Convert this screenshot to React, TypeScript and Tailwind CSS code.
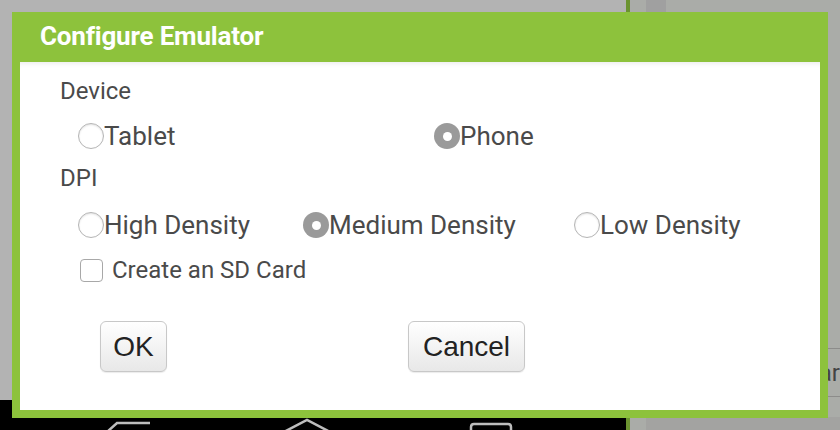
import React from "react";

const Radio = ({ checked }: { checked?: boolean }) =>
  checked ? (
    <span className="flex h-[26px] w-[26px] shrink-0 items-center justify-center rounded-full bg-[#9a9a9a]">
      <span className="h-[9px] w-[9px] rounded-full bg-white" />
    </span>
  ) : (
    <span className="h-[26px] w-[26px] shrink-0 rounded-full border border-[#b5b5b5] bg-white shadow-[inset_0_1px_2px_rgba(0,0,0,0.12)]" />
  );

const Option = ({ label, checked, className }: { label: string; checked?: boolean; className?: string }) => (
  <label className={`flex items-center ${className ?? ""}`}>
    <Radio checked={checked} />
    <span className="text-[26px] leading-none">{label}</span>
  </label>
);

const Button = ({ label, className }: { label: string; className?: string }) => (
  <button
    className={`h-[51px] rounded-[6px] border border-[#c8c8c8] bg-gradient-to-b from-white to-[#e8e8e8] text-[28px] text-[#222] shadow-[0_1px_1px_rgba(0,0,0,0.08)] font-['Liberation_Sans',Arial,sans-serif] ${className ?? ""}`}
  >
    {label}
  </button>
);

export default function App() {
  return (
    <div className="relative h-[430px] w-[840px] overflow-hidden font-['Roboto',sans-serif]">
      {/* page behind the dialog */}
      <div className="flex h-full">
        <div className="flex w-[626px] flex-col">
          <div className="flex-1 bg-[#b3b3b3]" />
          <div className="h-[30px] bg-black">
            <svg width="626" height="30" viewBox="0 0 626 30">
              <g fill="none" stroke="#bdbdbd" strokeWidth="2.5">
                <path d="M107 32 L117 23 L150 23" />
                <path d="M280 34 L307 20 L334 34" />
                <path d="M471 34 L471 27 Q471 24 474 24 L508 24 Q511 24 511 27 L511 34" />
              </g>
            </svg>
          </div>
        </div>
        <div className="w-[4px] bg-[#6b9330]" />
        <div className="flex flex-1 flex-col bg-[#aaaca8]">
          <div className="ml-[16px] h-[12px] w-[20px] bg-[#a0a0a0]" />
          <div className="h-[336px]" />
          <div className="flex h-[49px] items-center justify-end border-y border-[#8c8c8a]">
            <span className="text-[24px] text-[#444]">ar</span>
          </div>
          <div className="mt-[20px] ml-[16px] flex-1 bg-[#a3a3a1]" />
        </div>
      </div>

      {/* dialog */}
      <div className="absolute left-[12px] top-[12px] flex w-[816px] flex-col bg-[#8dc23c] px-[8px] pb-[8px]">
        <div className="flex h-[50px] items-center pb-[2px] pl-[20px]">
          <h1 className="text-[26px] font-bold tracking-[-0.2px] text-white">Configure Emulator</h1>
        </div>
        <div className="flex h-[348px] flex-col bg-white pl-[40px] text-[#4a4a4a] shadow-[inset_0_6px_6px_-6px_rgba(0,0,0,0.12)]">
          <div className="mt-[17px] text-[24px] leading-none">Device</div>
          <div className="mt-[20px] flex pl-[18px]">
            <Option label="Tablet" className="w-[356px]" />
            <Option label="Phone" checked />
          </div>
          <div className="mt-[17px] text-[24px] leading-none">DPI</div>
          <div className="mt-[22px] flex pl-[18px]">
            <Option label="High Density" className="w-[225px]" />
            <Option label="Medium Density" checked className="w-[271px]" />
            <Option label="Low Density" />
          </div>
          <label className="mt-[20px] flex items-center pl-[20px]">
            <span className="h-[23px] w-[23px] rounded-[4px] border border-[#a8a8a8] bg-white" />
            <span className="ml-[9px] text-[24px] leading-none">Create an SD Card</span>
          </label>
          <div className="mt-[39px] flex pl-[40px]">
            <Button label="OK" className="w-[67px]" />
            <Button label="Cancel" className="ml-[241px] w-[117px]" />
          </div>
        </div>
      </div>
    </div>
  );
}
